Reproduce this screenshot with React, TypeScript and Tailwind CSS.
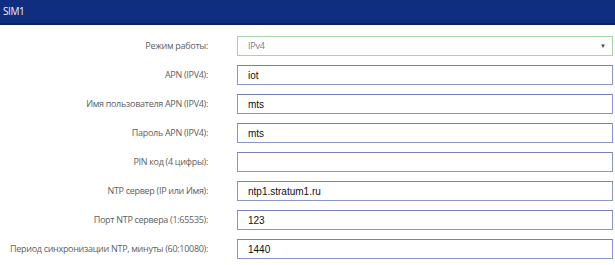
const rows = [
  { label: "APN (IPV4):", value: "iot" },
  { label: "Имя пользователя APN (IPV4):", value: "mts" },
  { label: "Пароль APN (IPV4):", value: "mts" },
  { label: "PIN код (4 цифры):", value: "" },
  { label: "NTP сервер (IP или Имя):", value: "ntp1.stratum1.ru" },
  { label: "Порт NTP сервера (1:65535):", value: "123" },
  { label: "Период синхронизации NTP, минуты (60:10080):", value: "1440" },
];

export default function App() {
  return (
    <div className="w-[615px] h-[265px] bg-white overflow-hidden">
      {/* Header */}
      <div className="h-[25px] bg-[#102e7f] border-b-2 border-[#0a2163] flex items-center px-[3px]">
        <span className="text-[#eef] text-[10px] font-['Open_Sans',sans-serif] tracking-[-0.4px]">SIM1</span>
      </div>

      <div className="flex flex-col gap-[9px] pt-[11px]">
        {/* Mode select */}
        <div className="flex items-center h-[20px]">
          <div className="w-[208px] text-right text-[9px] tracking-[-0.3px] text-[#606060] font-['Open_Sans',sans-serif]">Режим работы:</div>
          <div className="ml-[29px] w-[376px] h-[20px] border border-[#a3d6a3] flex items-center justify-between pl-[10px] pr-[6px]">
            <span className="text-[9px] tracking-[-0.2px] text-[#808080] font-['Open_Sans',sans-serif]">IPv4</span>
            <span className="text-[6px] text-[#444]">▼</span>
          </div>
        </div>

        {rows.map((r) => (
          <div key={r.label} className="flex items-center h-[20px]">
            <div className="w-[208px] text-right text-[9px] tracking-[-0.3px] text-[#606060] font-['Open_Sans',sans-serif] whitespace-nowrap">{r.label}</div>
            <div className="ml-[29px] w-[376px] h-[20px] border border-[#8796c4] border-t-[#7482b4] flex items-center pl-[10px]">
              <span className="text-[10px] text-[#111] font-['Liberation_Sans',Arial,sans-serif]">{r.value}</span>
            </div>
          </div>
        ))}
      </div>
    </div>
  );
}
